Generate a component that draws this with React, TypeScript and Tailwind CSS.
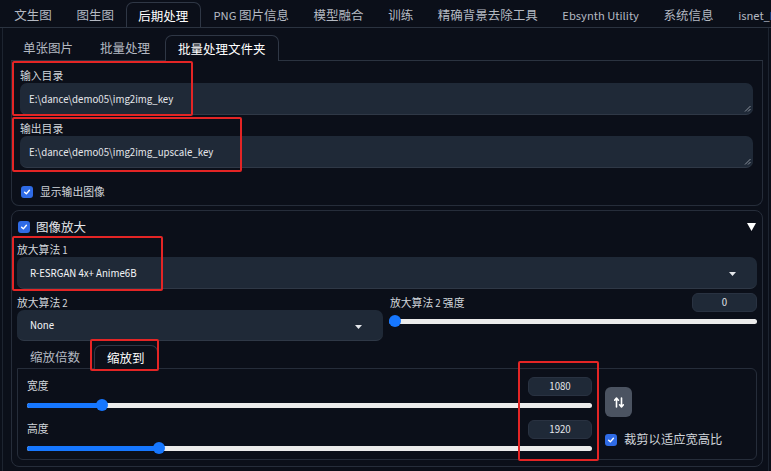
import React from "react";

function Check() {
  return (
    <span className="inline-flex items-center justify-center w-[12px] h-[12px] rounded-[3px] bg-[#2f6be6] shrink-0">
      <svg width="8" height="8" viewBox="0 0 10 10">
        <path d="M2 5.2 L4.2 7.3 L8 2.8" fill="none" stroke="white" strokeWidth="1.8" strokeLinecap="round" strokeLinejoin="round" />
      </svg>
    </span>
  );
}

function Caret() {
  return (
    <svg width="7" height="4" viewBox="0 0 7 4">
      <path d="M0 0 L7 0 L3.5 4 Z" fill="#e5e7eb" />
    </svg>
  );
}

function ResizeHandle() {
  return (
    <svg className="absolute right-[2px] bottom-[2px]" width="7" height="7" viewBox="0 0 7 7">
      <path d="M6.5 1 L1 6.5 M6.5 4 L4 6.5" stroke="#8b929c" strokeWidth="1" />
    </svg>
  );
}

function Slider({ pct }: { pct: number }) {
  return (
    <div className="relative h-[12px] flex items-center">
      <div className="h-[5px] w-full rounded-full bg-[#ebebeb]" />
      <div
        className="absolute left-0 h-[5px] rounded-full bg-[#1677ff]"
        style={{ width: `calc((100% - 12px) * ${pct / 100} + 6px)` }}
      />
      <div
        className="absolute top-0 w-[12px] h-[12px] rounded-full bg-[#1677ff]"
        style={{ left: `calc((100% - 12px) * ${pct / 100})` }}
      />
    </div>
  );
}

function NumBox({ v }: { v: string }) {
  return (
    <div className="w-[64px] h-[19px] pt-[2px] rounded-[6px] bg-[#1f2937] border border-[#293241] flex items-center justify-center text-[10.8px] leading-none text-[#e5e7eb]">
      {v}
    </div>
  );
}

const topTabs = ["文生图", "图生图", "后期处理", "PNG 图片信息", "模型融合", "训练", "精确背景去除工具", "Ebsynth Utility", "系统信息", "isnet_Pro"];
const subTabs = ["单张图片", "批量处理", "批量处理文件夹"];

export default function App() {
  return (
    <div className="relative w-[771px] h-[471px] overflow-hidden bg-[#0b0f19] text-[#e5e7eb] font-['Source_Sans_3','Noto_Sans_CJK_SC',sans-serif]">
      {/* top tabs */}
      <div className="h-[28px] flex items-end pl-[2px] border-b border-[#2b3340] whitespace-nowrap overflow-hidden">
        {topTabs.map((t, i) =>
          i === 2 ? (
            <div
              key={t}
              className="h-[26px] -mb-px pt-[3px] pl-[11px] pr-[12px] flex items-center text-[12.5px] text-white bg-[#0b0f19] border border-b-0 border-[#2f3745] rounded-t-[7px] leading-none"
            >
              {t}
            </div>
          ) : (
            <div key={t} className="h-[25px] pt-[3px] px-[12.3px] flex items-center text-[12.5px] text-[#b4b9c2] leading-none shrink-0">
              {t}
            </div>
          )
        )}
      </div>

      {/* outer panel */}
      <div className="h-[443px] mx-[2px] border-x border-[#1d2430] pt-[8px] pl-[8px] pr-[5px]">
        {/* sub tabs */}
        <div className="h-[25px] flex items-end border-b border-[#2b3340] gap-[3px]">
          {subTabs.map((t, i) =>
            i === 2 ? (
              <div
                key={t}
                className="h-[26px] -mb-px pt-[3px] px-[12px] flex items-center text-[12.5px] text-white bg-[#0b0f19] border border-b-0 border-[#2f3745] rounded-t-[7px] leading-none"
              >
                {t}
              </div>
            ) : (
              <div key={t} className="h-[25px] pt-[3px] px-[12px] flex items-center text-[12.5px] text-[#b4b9c2] leading-none">
                {t}
              </div>
            )
          )}
        </div>

        {/* panel 1 */}
        <div className="border border-t-0 border-[#262d3a] rounded-b-[8px] pt-[6px] pl-[8px] pr-[9px] pb-[5px]">
          <div className="h-[16px] pt-[4px] flex items-center text-[10.8px] text-[#d1d5db] leading-none">输入目录</div>
          <div className="relative h-[32px] pt-[3px] rounded-[7px] bg-[#1f2937] border-b border-[#2f3846] flex items-center pl-[9px] text-[10.8px] leading-none text-[#e5e7eb]">
            E:\dance\demo05\img2img_key
            <ResizeHandle />
          </div>
          <div className="h-[16px] pt-[4px] mt-[5px] flex items-center text-[10.8px] text-[#d1d5db] leading-none">输出目录</div>
          <div className="relative h-[32px] pt-[3px] rounded-[7px] bg-[#1f2937] border-b border-[#2f3846] flex items-center pl-[9px] text-[10.8px] leading-none text-[#e5e7eb]">
            E:\dance\demo05\img2img_upscale_key
            <ResizeHandle />
          </div>
          <div className="h-[16px] mt-[16px] flex items-center gap-[7px] pl-[1px] text-[10.8px] text-[#d1d5db] leading-none">
            <Check />
            <span className="pt-[2px]">显示输出图像</span>
          </div>
        </div>

        {/* panel 2 */}
        <div className="mt-[4px] h-[257px] border border-[#262d3a] rounded-[8px] pt-[8px] px-[5px]">
          <div className="h-[16px] flex items-center justify-between px-[1px]">
            <div className="flex items-center gap-[6px] text-[12.5px] text-[#e5e7eb] leading-none">
              <Check />
              <span className="pt-[2px]">图像放大</span>
            </div>
            <svg width="9" height="8" viewBox="0 0 9 8">
              <path d="M0 0 L9 0 L4.5 8 Z" fill="#ffffff" />
            </svg>
          </div>
          <div className="h-[14px] mt-[8px] pt-[3px] flex items-center text-[10.8px] text-[#d1d5db] leading-none">放大算法 1</div>
          <div className="h-[32px] pt-[3px] rounded-[7px] bg-[#1f2937] border-b border-[#2f3846] flex items-center justify-between pl-[13px] pr-[21px] text-[10.8px] leading-none text-[#f3f4f6]">
            <span>R-ESRGAN 4x+ Anime6B</span>
            <Caret />
          </div>

          <div className="mt-[7px] flex gap-[6px]">
            <div className="w-[366px]">
              <div className="h-[14px] pt-[3px] flex items-center text-[10.8px] text-[#d1d5db] leading-none">放大算法 2</div>
              <div className="h-[31px] pt-[3px] rounded-[7px] bg-[#1f2937] border-b border-[#2f3846] flex items-center justify-between pl-[13px] pr-[21px] text-[10.8px] leading-none text-[#f3f4f6]">
                <span>None</span>
                <Caret />
              </div>
            </div>
            <div className="flex-1 -mt-[3px]">
              <div className="flex items-center justify-between">
                <span className="text-[10.8px] text-[#d1d5db] leading-none pl-[1px] pt-[3px]">放大算法 2 强度</span>
                <div className="w-[65px] h-[19px] pt-[2px] rounded-[6px] bg-[#1f2937] border border-[#293241] flex items-center justify-center text-[10.8px] leading-none text-[#e5e7eb]">
                  0
                </div>
              </div>
              <div className="mt-[3px]">
                <Slider pct={0} />
              </div>
            </div>
          </div>

          {/* sub tabs 2 */}
          <div className="mt-[4px] h-[23px] flex items-end pl-[1px] gap-[2px]">
            <div className="h-[23px] pt-[4px] px-[12px] flex items-center text-[12.5px] text-[#b4b9c2] leading-none">缩放倍数</div>
            <div className="h-[24px] pt-[3px] -mb-px px-[12px] flex items-center text-[12.5px] text-white bg-[#0b0f19] border border-b-0 border-[#2f3745] rounded-t-[7px] leading-none">
              缩放到
            </div>
          </div>
          <div className="h-[92px] border border-[#262d3a] rounded-b-[6px] rounded-tr-[6px] pt-[8px] px-[9px] flex gap-[13px]">
            <div className="w-[565px]">
              <div className="flex items-center justify-between">
                <span className="text-[10.8px] text-[#d1d5db] leading-none pt-[2px]">宽度</span>
                <NumBox v="1080" />
              </div>
              <div className="mt-[3px]">
                <Slider pct={12.5} />
              </div>
              <div className="mt-[9px] flex items-center justify-between">
                <span className="text-[10.8px] text-[#d1d5db] leading-none pt-[2px]">高度</span>
                <NumBox v="1920" />
              </div>
              <div className="mt-[3px]">
                <Slider pct={22.8} />
              </div>
            </div>
            <div className="flex flex-col pt-[10px]">
              <div className="w-[27px] h-[30px] rounded-[6px] bg-[#4b5361] flex items-center justify-center">
                <svg width="10" height="11" viewBox="0 0 10 11">
                  <path d="M2.5 10 L2.5 1.2 M0.6 3.2 L2.5 1 L4.4 3.2" fill="none" stroke="white" strokeWidth="1.6" strokeLinecap="round" strokeLinejoin="round" />
                  <path d="M7.5 1 L7.5 9.8 M5.6 7.8 L7.5 10 L9.4 7.8" fill="none" stroke="white" strokeWidth="1.6" strokeLinecap="round" strokeLinejoin="round" />
                </svg>
              </div>
              <div className="mt-[16px] flex items-center gap-[7px] whitespace-nowrap text-[12.3px] text-[#d1d5db] leading-none">
                <Check />
                <span className="pt-[1px]">裁剪以适应宽高比</span>
              </div>
            </div>
          </div>
        </div>
      </div>

      {/* red annotation boxes */}
      <div className="absolute left-[12px] top-[61px] w-[181px] h-[55px] border-2 border-[#e42525] rounded-[2px]" />
      <div className="absolute left-[12px] top-[117px] w-[230px] h-[55px] border-2 border-[#e42525] rounded-[2px]" />
      <div className="absolute left-[12px] top-[236px] w-[151px] h-[55px] border-2 border-[#e42525] rounded-[2px]" />
      <div className="absolute left-[90px] top-[339px] w-[69px] h-[32px] border-2 border-[#e42525] rounded-[2px]" />
      <div className="absolute left-[518px] top-[361px] w-[81px] h-[100px] border-2 border-[#e42525] rounded-[2px]" />
    </div>
  );
}
